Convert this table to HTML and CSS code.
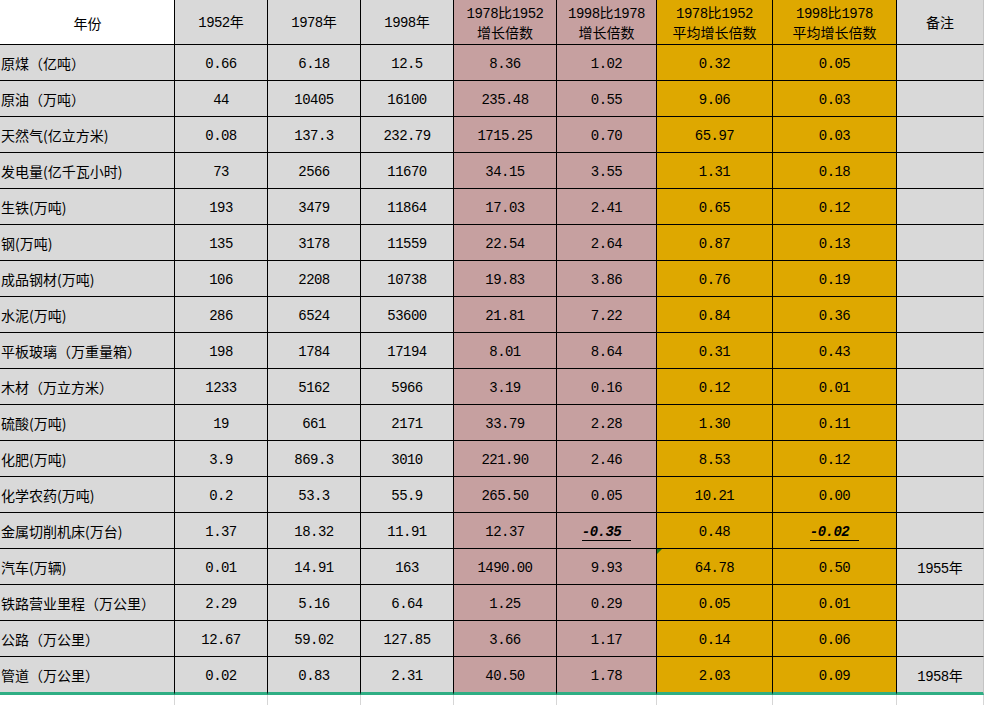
FILE: index.html
```html
<!DOCTYPE html>
<html lang="zh">
<head>
<meta charset="utf-8">
<title>主要工业产品产量增长</title>
<link rel="stylesheet" href="styles.css">
</head>
<body>
<table class="sheet">
  <colgroup>
    <col class="w-name"><col class="w-yr"><col class="w-yr"><col class="w-yr">
    <col class="w-g1"><col class="w-g2"><col class="w-a1"><col class="w-a2"><col class="w-note">
  </colgroup>
  <thead>
    <tr class="head">
      <th class="c-name head-name">年份</th>
      <th class="c-gray"><span class="lat">1952</span>年</th>
      <th class="c-gray"><span class="lat">1978</span>年</th>
      <th class="c-gray"><span class="lat">1998</span>年</th>
      <th class="c-pink"><span class="lat">1978</span>比<span class="lat">1952</span><br>增长倍数</th>
      <th class="c-pink"><span class="lat">1998</span>比<span class="lat">1978</span><br>增长倍数</th>
      <th class="c-orange"><span class="lat">1978</span>比<span class="lat">1952</span><br>平均增长倍数</th>
      <th class="c-orange"><span class="lat">1998</span>比<span class="lat">1978</span><br>平均增长倍数</th>
      <th class="c-gray c-last">备注</th>
    </tr>
  </thead>
  <tbody>
    <tr><td class="c-name">原煤（亿吨）</td><td class="c-gray num">0.66</td><td class="c-gray num">6.18</td><td class="c-gray num">12.5</td><td class="c-pink num">8.36</td><td class="c-pink num">1.02</td><td class="c-orange num">0.32</td><td class="c-orange num">0.05</td><td class="c-gray c-last"></td></tr>
    <tr><td class="c-name">原油（万吨）</td><td class="c-gray num">44</td><td class="c-gray num">10405</td><td class="c-gray num">16100</td><td class="c-pink num">235.48</td><td class="c-pink num">0.55</td><td class="c-orange num">9.06</td><td class="c-orange num">0.03</td><td class="c-gray c-last"></td></tr>
    <tr><td class="c-name">天然气(亿立方米)</td><td class="c-gray num">0.08</td><td class="c-gray num">137.3</td><td class="c-gray num">232.79</td><td class="c-pink num">1715.25</td><td class="c-pink num">0.70</td><td class="c-orange num">65.97</td><td class="c-orange num">0.03</td><td class="c-gray c-last"></td></tr>
    <tr><td class="c-name">发电量(亿千瓦小时)</td><td class="c-gray num">73</td><td class="c-gray num">2566</td><td class="c-gray num">11670</td><td class="c-pink num">34.15</td><td class="c-pink num">3.55</td><td class="c-orange num">1.31</td><td class="c-orange num">0.18</td><td class="c-gray c-last"></td></tr>
    <tr><td class="c-name">生铁(万吨)</td><td class="c-gray num">193</td><td class="c-gray num">3479</td><td class="c-gray num">11864</td><td class="c-pink num">17.03</td><td class="c-pink num">2.41</td><td class="c-orange num">0.65</td><td class="c-orange num">0.12</td><td class="c-gray c-last"></td></tr>
    <tr><td class="c-name">钢(万吨)</td><td class="c-gray num">135</td><td class="c-gray num">3178</td><td class="c-gray num">11559</td><td class="c-pink num">22.54</td><td class="c-pink num">2.64</td><td class="c-orange num">0.87</td><td class="c-orange num">0.13</td><td class="c-gray c-last"></td></tr>
    <tr><td class="c-name">成品钢材(万吨)</td><td class="c-gray num">106</td><td class="c-gray num">2208</td><td class="c-gray num">10738</td><td class="c-pink num">19.83</td><td class="c-pink num">3.86</td><td class="c-orange num">0.76</td><td class="c-orange num">0.19</td><td class="c-gray c-last"></td></tr>
    <tr><td class="c-name">水泥(万吨)</td><td class="c-gray num">286</td><td class="c-gray num">6524</td><td class="c-gray num">53600</td><td class="c-pink num">21.81</td><td class="c-pink num">7.22</td><td class="c-orange num">0.84</td><td class="c-orange num">0.36</td><td class="c-gray c-last"></td></tr>
    <tr><td class="c-name">平板玻璃（万重量箱）</td><td class="c-gray num">198</td><td class="c-gray num">1784</td><td class="c-gray num">17194</td><td class="c-pink num">8.01</td><td class="c-pink num">8.64</td><td class="c-orange num">0.31</td><td class="c-orange num">0.43</td><td class="c-gray c-last"></td></tr>
    <tr><td class="c-name">木材（万立方米）</td><td class="c-gray num">1233</td><td class="c-gray num">5162</td><td class="c-gray num">5966</td><td class="c-pink num">3.19</td><td class="c-pink num">0.16</td><td class="c-orange num">0.12</td><td class="c-orange num">0.01</td><td class="c-gray c-last"></td></tr>
    <tr><td class="c-name">硫酸(万吨)</td><td class="c-gray num">19</td><td class="c-gray num">661</td><td class="c-gray num">2171</td><td class="c-pink num">33.79</td><td class="c-pink num">2.28</td><td class="c-orange num">1.30</td><td class="c-orange num">0.11</td><td class="c-gray c-last"></td></tr>
    <tr><td class="c-name">化肥(万吨)</td><td class="c-gray num">3.9</td><td class="c-gray num">869.3</td><td class="c-gray num">3010</td><td class="c-pink num">221.90</td><td class="c-pink num">2.46</td><td class="c-orange num">8.53</td><td class="c-orange num">0.12</td><td class="c-gray c-last"></td></tr>
    <tr><td class="c-name">化学农药(万吨)</td><td class="c-gray num">0.2</td><td class="c-gray num">53.3</td><td class="c-gray num">55.9</td><td class="c-pink num">265.50</td><td class="c-pink num">0.05</td><td class="c-orange num">10.21</td><td class="c-orange num">0.00</td><td class="c-gray c-last"></td></tr>
    <tr><td class="c-name">金属切削机床(万台)</td><td class="c-gray num">1.37</td><td class="c-gray num">18.32</td><td class="c-gray num">11.91</td><td class="c-pink num">12.37</td><td class="c-pink num"><span class="neg">-0.35</span></td><td class="c-orange num">0.48</td><td class="c-orange num"><span class="neg">-0.02</span></td><td class="c-gray c-last"></td></tr>
    <tr><td class="c-name">汽车(万辆)</td><td class="c-gray num">0.01</td><td class="c-gray num">14.91</td><td class="c-gray num">163</td><td class="c-pink num">1490.00</td><td class="c-pink num">9.93</td><td class="c-orange num flagged">64.78</td><td class="c-orange num">0.50</td><td class="c-gray c-last note"><span class="lat">1955</span>年</td></tr>
    <tr><td class="c-name">铁路营业里程（万公里）</td><td class="c-gray num">2.29</td><td class="c-gray num">5.16</td><td class="c-gray num">6.64</td><td class="c-pink num">1.25</td><td class="c-pink num">0.29</td><td class="c-orange num">0.05</td><td class="c-orange num">0.01</td><td class="c-gray c-last"></td></tr>
    <tr><td class="c-name">公路（万公里）</td><td class="c-gray num">12.67</td><td class="c-gray num">59.02</td><td class="c-gray num">127.85</td><td class="c-pink num">3.66</td><td class="c-pink num">1.17</td><td class="c-orange num">0.14</td><td class="c-orange num">0.06</td><td class="c-gray c-last"></td></tr>
    <tr class="final"><td class="c-name">管道（万公里）</td><td class="c-gray num">0.02</td><td class="c-gray num">0.83</td><td class="c-gray num">2.31</td><td class="c-pink num">40.50</td><td class="c-pink num">1.78</td><td class="c-orange num">2.03</td><td class="c-orange num">0.09</td><td class="c-gray c-last note"><span class="lat">1958</span>年</td></tr>
    <tr class="filler"><td></td><td></td><td></td><td></td><td></td><td></td><td></td><td></td><td class="c-last"></td></tr>
  </tbody>
</table>
</body>
</html>
```
FILE: styles.css
```css
html, body {
  margin: 0;
  padding: 0;
  background: #ffffff;
}

.sheet {
  border-collapse: separate;
  border-spacing: 0;
  table-layout: fixed;
  width: 984px;
  color: #000;
  font-family: "Liberation Mono", "Noto Sans CJK SC", monospace;
  font-size: 14px;
  letter-spacing: -0.55px;
}

.w-name { width: 175px; }
.w-yr { width: 93px; }
.w-g1 { width: 103px; }
.w-g2 { width: 100px; }
.w-a1 { width: 116px; }
.w-a2 { width: 124px; }
.w-note { width: 87px; }

.sheet th,
.sheet td {
  box-sizing: border-box;
  padding: 0;
  border-right: 1px solid #000;
  border-bottom: 1px solid #000;
  text-align: center;
  vertical-align: middle;
  font-weight: normal;
  white-space: nowrap;
  overflow: hidden;
}

.head th {
  height: 45px;
  line-height: 18px;
  padding-top: 0;
  font-family: "Noto Sans CJK SC", sans-serif;
  letter-spacing: 0;
}

.lat {
  font-family: "Liberation Mono", monospace;
  letter-spacing: -0.55px;
}

.sheet tbody td {
  height: 36px;
  line-height: 16px;
  padding-top: 2px;
}

.c-gray { background: #d9d9d9; }
.c-pink { background: #c6a0a0; }
.c-orange { background: #dea800; }

.sheet .c-name {
  background: #d9d9d9;
  text-align: left;
  font-family: "Noto Sans CJK SC", sans-serif;
  font-size: 14px;
  letter-spacing: 0;
  padding-left: 1px;
  padding-top: 1px;
}

.sheet .head-name {
  background: #ffffff;
  text-align: center;
}

.sheet .c-last {
  border-right: 1px solid #c4c4c4;
}

.sheet .note {
  font-family: "Noto Sans CJK SC", sans-serif;
  letter-spacing: 0;
}

.neg {
  display: inline-block;
  font-weight: bold;
  font-style: italic;
  line-height: 15px;
  padding-right: 10px;
  border-bottom: 1px solid #000;
  margin-top: 3px;
}

.flagged {
  position: relative;
}

.flagged::before {
  content: "";
  position: absolute;
  left: 0;
  top: 0;
  border-top: 5px solid #1f7a1f;
  border-right: 5px solid transparent;
}

.sheet .final td {
  border-bottom: 3px solid #2fae84;
  height: 38px;
}

.sheet .filler td {
  height: 11px;
  padding: 0;
  background: #ffffff;
  border-bottom: none;
  border-right: 1px solid #d6d6d6;
}
```
